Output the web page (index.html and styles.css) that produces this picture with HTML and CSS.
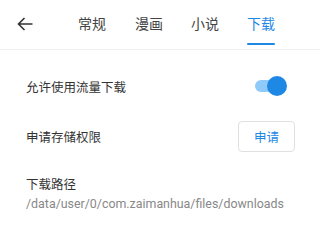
FILE: index.html
```html
<!DOCTYPE html>
<html>
<head>
<meta charset="utf-8">
<link rel="stylesheet" href="styles.css">
</head>
<body>
<div class="app">
  <header class="topbar">
    <div class="back">
      <svg width="16" height="14" viewBox="0 0 16 14"><path d="M15.5 7H1.5M7.5 1L1.5 7l6 6" fill="none" stroke="#333" stroke-width="1.6"/></svg>
    </div>
    <nav class="tabs">
      <span class="tab">常规</span>
      <span class="tab">漫画</span>
      <span class="tab">小说</span>
      <span class="tab active">下载</span>
    </nav>
  </header>
  <section class="list">
    <div class="row">
      <span class="label">允许使用流量下载</span>
      <span class="switch"><span class="track"></span><span class="thumb"></span></span>
    </div>
    <div class="row">
      <span class="label">申请存储权限</span>
      <button class="btn">申请</button>
    </div>
    <div class="row col">
      <span class="label">下载路径</span>
      <span class="sub">/data/user/0/com.zaimanhua/files/downloads</span>
    </div>
  </section>
</div>
</body>
</html>
```
FILE: styles.css
```css
html, body { margin: 0; padding: 0; background: #fff; }
body { font-family: Roboto, "Noto Sans CJK SC", sans-serif; color: #333; }
.app { width: 320px; }
.topbar { display: flex; align-items: center; height: 49px; border-bottom: 1px solid #eeeeee; }
.back { width: 64px; padding-left: 17px; box-sizing: border-box; display: flex; align-items: center; height: 100%; padding-bottom: 1px; }
.back svg { display: block; }
.tabs { display: flex; height: 100%; }
.tab { position: relative; padding: 0 14px; font-size: 14px; line-height: 49px; color: #444; }
.tab:nth-child(2) { padding: 0 14px 0 15px; }
.tab.active { color: #1e88e5; }
.tab.active::after { content: ""; position: absolute; left: 14px; right: 14px; bottom: 4px; height: 2px; background: #1e88e5; border-radius: 1px; }
.list { padding: 11px 25px 0 26px; }
.row { display: flex; align-items: center; justify-content: space-between; height: 50px; }
.label { font-size: 12.5px; color: #333; }
.switch { position: relative; width: 33px; height: 20px; margin-right: 8px; }
.track { position: absolute; left: 1px; top: 4px; width: 28px; height: 12px; border-radius: 6px; background: #90caf9; }
.thumb { position: absolute; right: 0; top: 0; width: 20px; height: 20px; border-radius: 50%; background: #1e88e5; }
.btn { width: 57px; height: 31px; border: 1px solid #e0e0e0; border-radius: 4px; background: #fff; color: #1e88e5; font-family: Roboto, "Noto Sans CJK SC", sans-serif; font-size: 12.5px; padding: 0; }
.row.col { flex-direction: column; align-items: flex-start; justify-content: flex-start; padding-top: 13px; height: auto; }
.sub { font-size: 12.4px; color: #888; margin-top: 3px; }
```
